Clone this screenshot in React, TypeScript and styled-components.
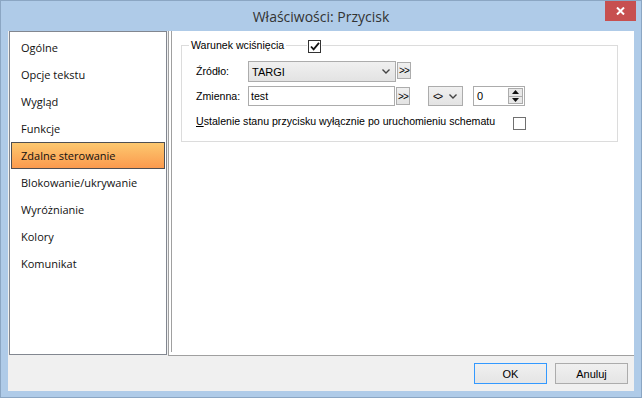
import React from 'react';
import styled, { createGlobalStyle } from 'styled-components';

const Global = createGlobalStyle`
  html, body { margin: 0; padding: 0; background: #afcbe8; }
  * { box-sizing: border-box; }
`;

const Window = styled.div`
  width: 642px;
  height: 398px;
  background: #afcbe8;
  border: 1px solid #8ba6c3;
  display: flex;
  flex-direction: column;
`;

const TitleBar = styled.div`
  height: 30px;
  flex: none;
  display: grid;
  grid-template-columns: 1fr auto 1fr;
  align-items: center;
`;

const Title = styled.div`
  grid-column: 2;
  font-family: 'Open Sans', 'Noto Sans', sans-serif;
  font-size: 14px;
  color: #333;
  padding-top: 1px;
`;

const CloseButton = styled.div`
  grid-column: 3;
  justify-self: end;
  align-self: start;
  width: 31px;
  height: 20px;
  margin-right: 5px;
  background: #c75050;
  display: flex;
  align-items: center;
  justify-content: center;
`;

const Client = styled.div`
  flex: 1;
  margin: 0 7px 6px 7px;
  background: #f0f0f0;
  display: flex;
  flex-direction: column;
`;

const Main = styled.div`
  display: flex;
  height: 325px;
  flex: none;
  align-items: flex-start;
`;

const List = styled.div`
  width: 158px;
  height: 324px;
  margin-left: 1px;
  background: #fff;
  border: 1px solid #828790;
  padding: 2px 1px;
  display: flex;
  flex-direction: column;
`;

const Item = styled.div<{ $selected?: boolean }>`
  height: 27px;
  flex: none;
  display: flex;
  align-items: center;
  padding-left: 9px;
  font-family: 'Open Sans', 'Noto Sans', sans-serif;
  font-size: 11px;
  color: #111;
  border: 1px solid ${(p) => (p.$selected ? '#4f4f52' : 'transparent')};
  background: ${(p) =>
    p.$selected ? 'linear-gradient(#fdc86f, #fb9a4e)' : 'transparent'};
`;

const Panel = styled.div`
  width: 466px;
  height: 325px;
  margin-left: 1px;
  background: #fff;
  border-left: 1px solid #a0a0a0;
  border-bottom: 1px solid #a0a0a0;
  padding-left: 2px;
`;

const PanelInner = styled.div`
  height: 321px;
  border-left: 1px solid #a0a0a0;
  padding: 7px 0 0 9px;
`;

const Group = styled.fieldset`
  position: relative;
  width: 437px;
  margin: 0;
  padding: 0 0 11px 14px;
  border: 1px solid #dcdcdc;
  font-family: 'Liberation Sans', Arial, sans-serif;
  font-size: 10.6px;
  color: #000;
`;

const Legend = styled.legend`
  margin-left: -7px;
  padding: 0 2px;
  line-height: 14px;
  font-size: 10.6px;
`;

const LegendCheck = styled.div`
  position: absolute;
  left: 125px;
  top: -12px;
  background: #fff;
  padding: 0 1px;
`;

const Box = styled.div<{ $dark?: boolean }>`
  width: 13px;
  height: 13px;
  border: 1px solid ${(p) => (p.$dark ? '#333' : '#707070')};
  background: #fff;
  display: flex;
  align-items: center;
  justify-content: center;
`;

const Row = styled.div<{ $top: number }>`
  display: flex;
  align-items: flex-start;
  margin-top: ${(p) => p.$top}px;
`;

const Label = styled.div<{ $h: number }>`
  width: 52px;
  line-height: ${(p) => p.$h}px;
`;

const Combo = styled.div<{ $w: number }>`
  width: ${(p) => p.$w}px;
  height: 21px;
  border: 1px solid #acacac;
  background: linear-gradient(#f0f0f0, #e3e3e3);
  display: flex;
  align-items: center;
  justify-content: space-between;
  padding: 0 5px 0 3px;
  font-size: 11px;
`;

const TextInput = styled.div<{ $w: number }>`
  width: ${(p) => p.$w}px;
  height: 20px;
  border: 1px solid #acacac;
  background: #fff;
  display: flex;
  align-items: center;
  padding-left: 2px;
`;

const MoreButton = styled.div<{ $h: number }>`
  width: 14px;
  height: ${(p) => p.$h}px;
  margin-left: 1px;
  margin-top: 1px;
  border: 1px solid #acacac;
  background: linear-gradient(#f0f0f0, #e3e3e3);
  display: flex;
  align-items: center;
  justify-content: center;
  font-size: 10px;
  letter-spacing: -0.8px;
  color: #000;
  overflow: hidden;
`;

const OpCombo = styled.div`
  width: 35px;
  height: 20px;
  margin-left: 18px;
  border: 1px solid #acacac;
  background: linear-gradient(#f0f0f0, #e3e3e3);
  display: flex;
  align-items: center;
  justify-content: space-between;
  padding: 0 5px 0 4px;
  font-size: 10px;
  letter-spacing: -1.5px;
`;

const Spinner = styled.div`
  width: 52px;
  height: 20px;
  margin-left: 10px;
  border: 1px solid #acacac;
  background: #fff;
  display: flex;
  align-items: stretch;
`;

const SpinValue = styled.div`
  flex: 1;
  display: flex;
  align-items: center;
  padding-left: 3px;
  font-size: 11px;
`;

const SpinButtons = styled.div`
  width: 15px;
  margin: 1px 1px 1px 0;
  border: 1px solid #acacac;
  background: #e8e8e8;
  display: flex;
  flex-direction: column;
`;

const SpinHalf = styled.div`
  flex: 1;
  display: flex;
  align-items: center;
  justify-content: center;
  & + & { border-top: 1px solid #acacac; }
`;

const LongLabel = styled.div`
  width: 317px;
  line-height: 14px;
`;

const Bottom = styled.div`
  flex: 1;
  display: flex;
  justify-content: flex-end;
  align-items: flex-start;
  gap: 8px;
  padding: 7px 6px 0 0;
`;

const Button = styled.div<{ $focused?: boolean }>`
  width: 73px;
  height: 21px;
  border: 1px solid ${(p) => (p.$focused ? '#3399ff' : '#acacac')};
  background: linear-gradient(#f0f0f0, #e5e5e5);
  display: flex;
  align-items: center;
  justify-content: center;
  font-family: 'Liberation Sans', Arial, sans-serif;
  font-size: 11px;
  color: #000;
`;

const Chevron = () => (
  <svg width="8" height="5" viewBox="0 0 8 5">
    <path d="M0.5 0.5 L4 4 L7.5 0.5" fill="none" stroke="#444" strokeWidth="1.4" />
  </svg>
);

const Check = () => (
  <svg width="10" height="9" viewBox="0 0 10 9">
    <path d="M1 4.5 L3.6 7.3 L9 0.8" fill="none" stroke="#111" strokeWidth="1.8" />
  </svg>
);

const items = [
  'Ogólne',
  'Opcje tekstu',
  'Wygląd',
  'Funkcje',
  'Zdalne sterowanie',
  'Blokowanie/ukrywanie',
  'Wyróżnianie',
  'Kolory',
  'Komunikat',
];

export default function App() {
  return (
    <>
      <Global />
      <Window>
        <TitleBar>
          <Title>Właściwości: Przycisk</Title>
          <CloseButton>
            <svg width="9" height="8" viewBox="0 0 9 8">
              <path d="M1 0.5 L8 7.5 M8 0.5 L1 7.5" stroke="#fff" strokeWidth="2" />
            </svg>
          </CloseButton>
        </TitleBar>
        <Client>
          <Main>
            <List>
              {items.map((it) => (
                <Item key={it} $selected={it === 'Zdalne sterowanie'}>
                  {it}
                </Item>
              ))}
            </List>
            <Panel>
              <PanelInner>
                <Group>
                  <Legend>Warunek wciśnięcia</Legend>
                  <LegendCheck>
                    <Box $dark>
                      <Check />
                    </Box>
                  </LegendCheck>
                  <Row $top={9}>
                    <Label $h={21}>Źródło:</Label>
                    <Combo $w={148}>
                      <span>TARGI</span>
                      <Chevron />
                    </Combo>
                    <MoreButton $h={17}>&gt;&gt;</MoreButton>
                  </Row>
                  <Row $top={4}>
                    <Label $h={20}>Zmienna:</Label>
                    <TextInput $w={147}>test</TextInput>
                    <MoreButton $h={18}>&gt;&gt;</MoreButton>
                    <OpCombo>
                      <span>&lt;&gt;</span>
                      <Chevron />
                    </OpCombo>
                    <Spinner>
                      <SpinValue>0</SpinValue>
                      <SpinButtons>
                        <SpinHalf>
                          <svg width="7" height="4" viewBox="0 0 7 4">
                            <path d="M0 4 L3.5 0 L7 4 Z" fill="#111" />
                          </svg>
                        </SpinHalf>
                        <SpinHalf>
                          <svg width="7" height="4" viewBox="0 0 7 4">
                            <path d="M0 0 L3.5 4 L7 0 Z" fill="#111" />
                          </svg>
                        </SpinHalf>
                      </SpinButtons>
                    </Spinner>
                  </Row>
                  <Row $top={8}>
                    <LongLabel>
                      <u>U</u>stalenie stanu przycisku wyłącznie po uruchomieniu schematu
                    </LongLabel>
                    <Box style={{ marginTop: 3 }} />
                  </Row>
                </Group>
              </PanelInner>
            </Panel>
          </Main>
          <Bottom>
            <Button $focused>OK</Button>
            <Button>Anuluj</Button>
          </Bottom>
        </Client>
      </Window>
    </>
  );
}
